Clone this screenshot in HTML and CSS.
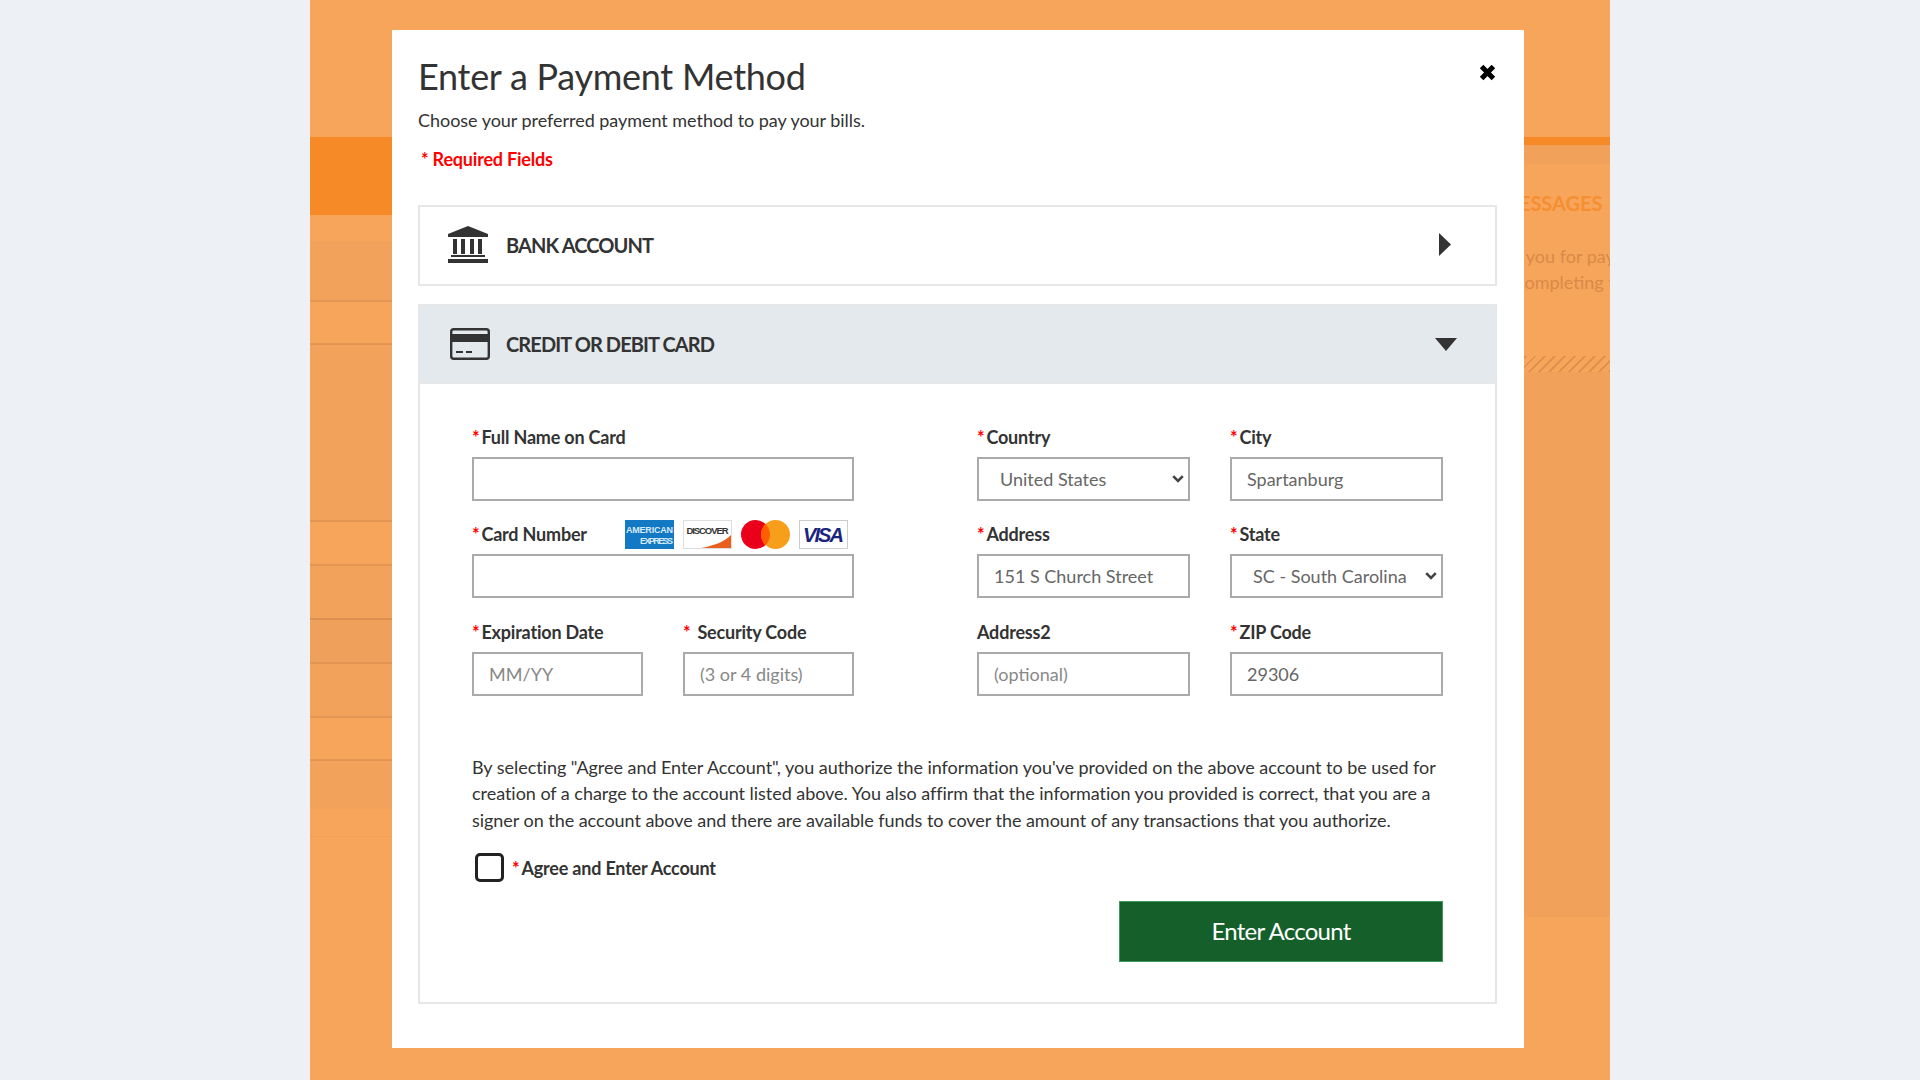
FILE: index.html
```html
<!DOCTYPE html>
<html lang="en">
<head>
<meta charset="utf-8">
<title>Enter a Payment Method</title>
<link rel="stylesheet" href="styles.css">
</head>
<body>
<div class="shell">
  <div class="backdrop">
    <div class="side-left">
      <div class="strip s-top"></div>
      <div class="strip s-active"></div>
      <div class="strip s-a"></div>
      <div class="strip s-b"></div>
      <div class="strip s-c"></div>
      <div class="strip s-d"></div>
      <div class="strip s-e"></div>
      <div class="strip s-f"></div>
      <div class="strip s-g"></div>
      <div class="strip s-h"></div>
      <div class="strip s-i"></div>
      <div class="strip s-j"></div>
      <div class="strip s-k"></div>
      <div class="strip s-l"></div>
    </div>
    <div class="side-right">
      <div class="right-bar"></div>
      <div class="right-sub"></div>
      <div class="right-panel">
        <div class="right-heading">MESSAGES</div>
        <p class="right-text">Thank you for pay</p>
        <p class="right-text">completing t</p>
        <div class="hatch"></div>
      </div>
    </div>
  </div>

  <main class="modal">
    <button class="close" type="button" aria-label="Close">
      <svg width="17" height="17" viewBox="0 0 17 17"><path d="M2.6 2.6 14.4 14.4M14.4 2.6 2.6 14.4" stroke="#000" stroke-width="5" fill="none"/></svg>
    </button>
    <h1 class="title">Enter a Payment Method</h1>
    <p class="subtitle">Choose your preferred payment method to pay your bills.</p>
    <p class="required">* Required Fields</p>

    <section class="acc-row">
      <svg class="acc-icon" width="40" height="37" viewBox="0 0 40 37">
        <path d="M20 0 40 8V11H0V8Z" fill="#333"/>
        <path d="M5 13H9V28H5ZM13 13H17V28H13ZM22 13H26V28H22ZM30 13H34V28H30Z" fill="#333"/>
        <path d="M3 29H37V31H3ZM0 33H40V37H0Z" fill="#333"/>
      </svg>
      <span class="acc-title">BANK ACCOUNT</span>
      <svg class="arrow-right" width="13" height="23" viewBox="0 0 13 23"><path d="M1 0 13 11.5 1 23Z" fill="#333"/></svg>
    </section>

    <section class="acc-card">
      <div class="acc-head">
        <svg class="acc-icon" width="40" height="32" viewBox="0 0 40 32">
          <rect x="1.2" y="1.2" width="37.6" height="29.6" rx="2.5" fill="none" stroke="#333" stroke-width="2.4"/>
          <path d="M1 6H39V14H1Z" fill="#333"/>
          <path d="M6 23H13V25H6ZM16 23H22V25H16Z" fill="#333"/>
        </svg>
        <span class="acc-title">CREDIT OR DEBIT CARD</span>
        <svg class="arrow-down" width="22" height="13" viewBox="0 0 22 13"><path d="M0 0H22L11 13Z" fill="#333"/></svg>
      </div>
      <form class="acc-body">
        <div class="fields">
          <div class="fields-left">
            <div class="field wide">
              <label class="label"><span class="star">*</span>Full Name on Card</label>
              <input class="input" type="text">
            </div>
            <div class="field wide">
              <div class="label-row">
                <label class="label"><span class="star">*</span>Card Number</label>
                <div class="logos">
                  <svg width="49" height="29" viewBox="0 0 49 29">
                    <rect width="49" height="29" fill="#1479c4"/>
                    <text x="24.5" y="12.5" class="amex-text" text-anchor="middle" textLength="47">AMERICAN</text>
                    <text x="48" y="23.5" class="amex-text" text-anchor="end" textLength="33">EXPRESS</text>
                  </svg>
                  <svg width="49" height="29" viewBox="0 0 49 29">
                    <rect x=".5" y=".5" width="48" height="28" fill="#fff" stroke="#ddd"/>
                    <path d="M48 15V28H18C30 26 41 22 48 15Z" fill="#e8601c"/>
                    <text x="24.5" y="13.5" class="disc-text" text-anchor="middle" textLength="42">DISCOVER</text>
                  </svg>
                  <svg width="49" height="29" viewBox="0 0 49 29">
                    <circle cx="14.5" cy="14.5" r="14.5" fill="#eb001b"/>
                    <circle cx="34.5" cy="14.5" r="14.5" fill="#f79e1b"/>
                    <path d="M24.5 4a14.5 14.5 0 0 1 0 21 14.5 14.5 0 0 1 0-21Z" fill="#ff5f00"/>
                  </svg>
                  <svg width="49" height="29" viewBox="0 0 49 29">
                    <rect x=".5" y=".5" width="48" height="28" fill="#fff" stroke="#ccc"/>
                    <text x="24.5" y="21.5" class="visa-text" text-anchor="middle" textLength="41">VISA</text>
                  </svg>
                </div>
              </div>
              <input class="input" type="text">
            </div>
            <div class="field">
              <label class="label"><span class="star">*</span>Expiration Date</label>
              <input class="input" type="text" placeholder="MM/YY">
            </div>
            <div class="field">
              <label class="label"><span class="star star-gap">*</span>Security Code</label>
              <input class="input" type="text" placeholder="(3 or 4 digits)">
            </div>
          </div>
          <div class="fields-right">
            <div class="field">
              <label class="label"><span class="star">*</span>Country</label>
              <select class="input select"><option>United States</option></select>
            </div>
            <div class="field">
              <label class="label"><span class="star">*</span>City</label>
              <input class="input" type="text" value="Spartanburg">
            </div>
            <div class="field">
              <label class="label"><span class="star">*</span>Address</label>
              <input class="input" type="text" value="151 S Church Street">
            </div>
            <div class="field">
              <label class="label"><span class="star">*</span>State</label>
              <select class="input select"><option>SC - South Carolina</option></select>
            </div>
            <div class="field">
              <label class="label">Address2</label>
              <input class="input" type="text" placeholder="(optional)">
            </div>
            <div class="field">
              <label class="label"><span class="star">*</span>ZIP Code</label>
              <input class="input" type="text" value="29306">
            </div>
          </div>
        </div>
        <p class="legal">By selecting "Agree and Enter Account", you authorize the information you've provided on the above account to be used for creation of a charge to the account listed above. You also affirm that the information you provided is correct, that you are a signer on the account above and there are available funds to cover the amount of any transactions that you authorize.</p>
        <div class="agree">
          <span class="checkbox"></span>
          <span class="label"><span class="star">*</span>Agree and Enter Account</span>
        </div>
        <div class="actions">
          <button class="submit" type="button">Enter Account</button>
        </div>
      </form>
    </section>
  </main>
</div>
</body>
</html>
```
FILE: styles.css
```css
* { box-sizing: border-box; }
html, body { margin: 0; padding: 0; height: 100%; }
body {
  background: #edf1f5;
  font-family: "Lato", "Open Sans", sans-serif;
  color: #333;
  overflow: hidden;
}
.shell {
  position: relative;
  width: 1300px;
  height: 1080px;
  margin: 0 auto;
  background: #f7a55b;
  overflow: hidden;
}
.backdrop { display: flex; justify-content: space-between; height: 100%; }
.side-left { width: 82px; display: flex; flex-direction: column; }
.strip { flex: none; border-bottom: 1px solid #e89a55; }
.s-top { height: 137px; border: 0; }
.s-active { height: 78px; background: #f58a27; border: 0; }
.s-a { height: 28px; border-color: #f0a05a; }
.s-b { height: 59px; background: #f2a25b; border-bottom: 2px solid #e39553; }
.s-c { height: 43px; border-bottom: 2px solid #e39553; }
.s-d { height: 177px; background: #f2a25b; border-bottom: 2px solid #e39553; }
.s-e { height: 44px; border-bottom: 2px solid #e39553; }
.s-f { height: 54px; background: #f2a25b; border-bottom: 2px solid #dc8f50; }
.s-g { height: 44px; background: #efa05a; border-bottom: 2px solid #e39553; }
.s-h { height: 54px; background: #f2a25b; border-bottom: 2px solid #e39553; }
.s-i { height: 43px; border-bottom: 2px solid #e39553; }
.s-j { height: 48px; background: #f2a25b; border-color: #f2a25b; }
.s-k { height: 28px; border-color: #f19e58; }
.s-l { height: 190px; border: 0; }

.side-right { width: 300px; padding-top: 137px; overflow: hidden; }
.right-bar { height: 8px; background: #f58a27; }
.right-sub { height: 19px; background: #f1a15a; }
.right-panel { height: 753px; background: linear-gradient(#f7a55b 0 208px, #f1a15a 208px); padding-left: 128px; }
.right-heading {
  padding-top: 26px;
  font-size: 20px;
  line-height: 26px;
  font-weight: 700;
  color: #f48f32;
  white-space: nowrap;
  margin-left: 62px;
  margin-bottom: 27px;
}
.right-text {
  margin: 0;
  font-size: 18px;
  line-height: 26px;
  color: #d98a48;
  white-space: nowrap;
  margin-left: 35px;
}
.right-text + .right-text { margin-left: 78px; }
.hatch {
  height: 16px;
  margin-top: 61px;
  background: repeating-linear-gradient(-45deg, #e2914e 0 2px, transparent 2px 7px);
}

.modal {
  position: absolute;
  left: 82px;
  top: 30px;
  width: 1132px;
  height: 1018px;
  padding: 23px 27px 0 26px;
  background: #fff;
}
.close {
  position: absolute;
  top: 34px;
  right: 28px;
  width: 17px;
  height: 17px;
  padding: 0;
  border: 0;
  background: none;
  display: block;
}
.close svg { display: block; }
.title {
  margin: 0;
  font-size: 36px;
  line-height: 46px;
  font-weight: 400;
  color: #333;
  letter-spacing: -.27px;
}
.subtitle { margin: 8px 0 0; font-size: 18px; line-height: 26px; color: #333; letter-spacing: -.04px; }
.required { margin: 13px 0 0; padding-left: 3px; font-size: 18px; line-height: 26px; font-weight: 700; color: #f00; letter-spacing: -.2px; }

.acc-row, .acc-head {
  display: flex;
  align-items: center;
  padding: 0 37px 0 30px;
  border: 2px solid #e6e7e8;
}
.acc-row { height: 81px; margin-top: 33px; padding-bottom: 2px; }
.acc-head { height: 80px; }
.acc-card { margin-top: 18px; }
.acc-head { background: #e4e9ee; }
.acc-icon { flex: none; display: block; margin-right: 16px; }
.acc-row .acc-icon { margin-left: -2px; margin-right: 18px; }
.acc-title { flex: 1; font-size: 20px; font-weight: 700; color: #333; letter-spacing: -.9px; }
.arrow-right { margin-right: 7px; }
.arrow-down { margin-right: 1px; }

.acc-body {
  padding: 39.5px 52px 38px;
  border: 2px solid #e6e7e8;
  border-top: 0;
  height: 620px;
}
.fields { display: flex; gap: 123px; }
.fields-left { width: 382px; display: grid; grid-template-columns: 1fr 1fr; column-gap: 40px; row-gap: 20.5px; }
.fields-right { flex: 1; display: grid; grid-template-columns: 1fr 1fr; column-gap: 40px; row-gap: 20.5px; }
.wide { grid-column: 1 / -1; }
.label { display: block; font-size: 18px; line-height: 26px; font-weight: 700; color: #333; white-space: nowrap; letter-spacing: -.2px; }
.field > .label { margin-bottom: 7px; }
.label-row { display: flex; justify-content: space-between; align-items: center; height: 26px; margin-bottom: 7px; padding-right: 6px; }
.logos { display: flex; gap: 9px; margin-top: 1px; }
.logos svg { display: block; flex: none; }
.amex-text { font: 700 9px "Liberation Sans", sans-serif; fill: #d6ebf8; }
.disc-text { font: 700 9.5px "Liberation Sans", sans-serif; fill: #333; }
.visa-text { font: italic 700 20px "Liberation Sans", sans-serif; fill: #1a237e; }
.star { color: #f00; margin-right: 2px; font-weight: 700; }
.star-gap { margin-right: 7px; }
.input {
  display: block;
  width: 100%;
  height: 44px;
  padding: 0 15px;
  border: 2px solid #aaa;
  border-radius: 0;
  background: #fff;
  font: 400 18px "Lato", "Open Sans", sans-serif;
  color: #666;
}
.input::placeholder { color: #888; opacity: 1; }
.select {
  padding-left: 21px;
  appearance: none;
  -webkit-appearance: none;
  background-image: url("data:image/svg+xml,%3Csvg xmlns='http://www.w3.org/2000/svg' width='12' height='8'%3E%3Cpath d='M1.2 1.2 6 6 10.8 1.2' fill='none' stroke='%23444' stroke-width='2.6'/%3E%3C/svg%3E");
  background-repeat: no-repeat;
  background-position: right 4px center;
}
.legal { margin: 58px 0 0; font-size: 18px; line-height: 26.5px; color: #333; letter-spacing: -.04px; }
.agree { display: flex; align-items: center; margin-top: 20px; padding-left: 3px; height: 29px; }
.checkbox { flex: none; width: 29px; height: 29px; border: 3px solid #222; border-radius: 5px; margin-right: 8px; background: #fff; }
.actions { display: flex; justify-content: flex-end; margin-top: 19px; }
.submit {
  width: 324px;
  height: 61px;
  padding: 0 0 2px;
  border: 1px solid #3f9a5e;
  background: #155f2b;
  color: #fff;
  font: 400 24px "Lato", "Open Sans", sans-serif;
  letter-spacing: -.75px;
}
```
